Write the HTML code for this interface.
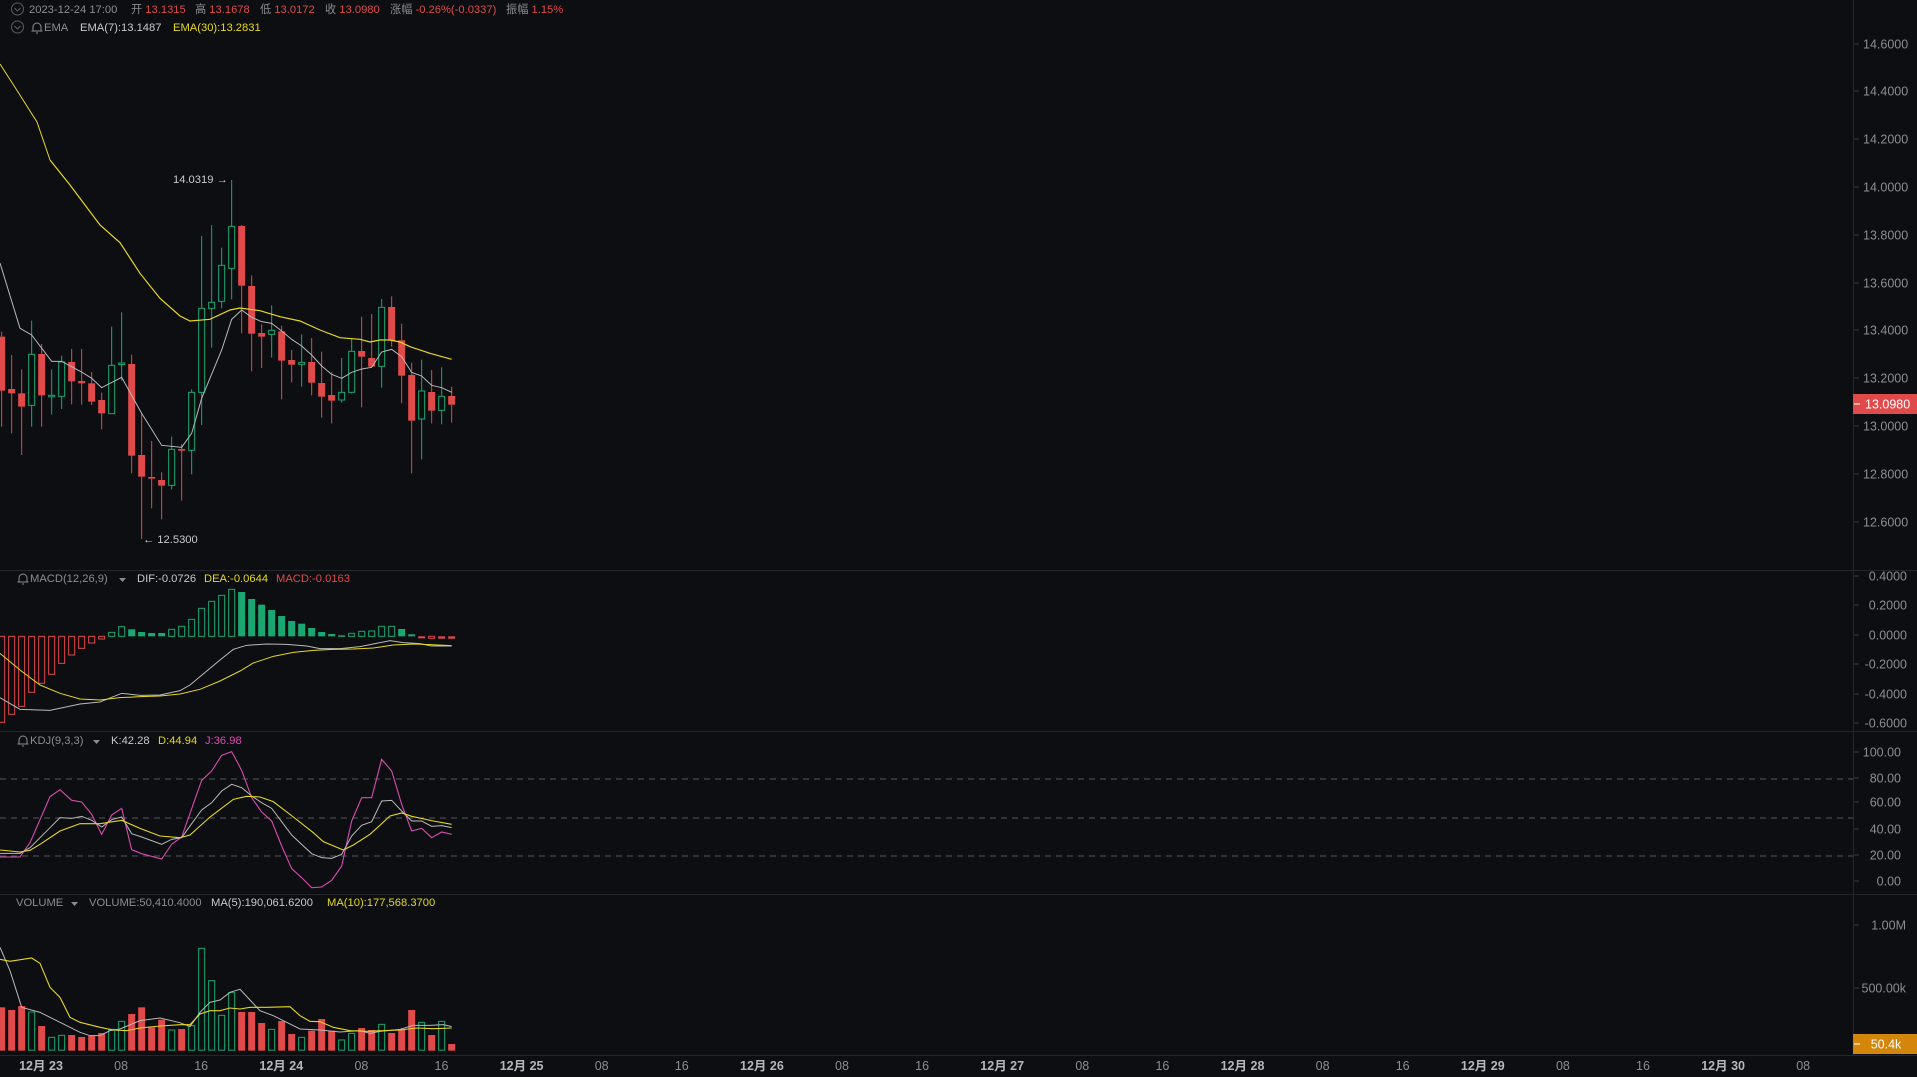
<!DOCTYPE html>
<html><head><meta charset="utf-8"><style>
html,body{margin:0;padding:0;background:#0d0e11;width:1917px;height:1077px;overflow:hidden}
svg{display:block}
text{font-family:"Liberation Sans","Noto Sans CJK SC",sans-serif;font-size:12.5px}
.h text{font-size:11.2px}
</style></head><body>
<svg id="s" width="1917" height="1077" viewBox="0 0 1917 1077" xmlns="http://www.w3.org/2000/svg">
<rect width="1917" height="1077" fill="#0d0e11"/>
<g stroke="#24262b" stroke-width="1">
<line x1="0" y1="570.5" x2="1917" y2="570.5"/><line x1="0" y1="731.5" x2="1917" y2="731.5"/>
<line x1="0" y1="894.5" x2="1917" y2="894.5"/><line x1="0" y1="1055.5" x2="1917" y2="1055.5"/>
<line x1="1853.5" y1="0" x2="1853.5" y2="1055"/>
</g>
<g stroke="#55585e" stroke-dasharray="6,5" stroke-width="1">
<line x1="0" y1="779" x2="1853" y2="779"/><line x1="0" y1="818" x2="1853" y2="818"/><line x1="0" y1="856" x2="1853" y2="856"/>
</g>
<g id="g"></g>
<!-- header -->
<g fill="#8a8d95" class="h">
<circle cx="17.5" cy="9" r="6" fill="none" stroke="#5a5d63"/><path d="M14.5 8l3 3 3-3" fill="none" stroke="#5a5d63"/>
<circle cx="17.5" cy="27" r="6" fill="none" stroke="#5a5d63"/><path d="M14.5 26l3 3 3-3" fill="none" stroke="#5a5d63"/>
<text x="29" y="13">2023-12-24 17:00</text>
<text x="131" y="13">开 <tspan fill="#e04a4a">13.1315</tspan></text>
<text x="195" y="13">高 <tspan fill="#e04a4a">13.1678</tspan></text>
<text x="260" y="13">低 <tspan fill="#e04a4a">13.0172</tspan></text>
<text x="325" y="13">收 <tspan fill="#e04a4a">13.0980</tspan></text>
<text x="390" y="13">涨幅 <tspan fill="#e04a4a">-0.26%(-0.0337)</tspan></text>
<text x="506" y="13">振幅 <tspan fill="#e04a4a">1.15%</tspan></text>
<text x="44" y="31">EMA</text>
<text x="80" y="31" fill="#c8c9cc">EMA(7):13.1487</text>
<text x="173" y="31" fill="#e6d81e">EMA(30):13.2831</text>
<text x="30" y="582">MACD(12,26,9)</text>
<text x="137" y="582" fill="#c8c9cc">DIF:-0.0726</text>
<text x="204" y="582" fill="#e6d81e">DEA:-0.0644</text>
<text x="276" y="582" fill="#e04a4a">MACD:-0.0163</text>
<text x="30" y="744">KDJ(9,3,3)</text>
<text x="111" y="744" fill="#c8c9cc">K:42.28</text>
<text x="158" y="744" fill="#e6d81e">D:44.94</text>
<text x="205" y="744" fill="#d94bb0">J:36.98</text>
<text x="16" y="906">VOLUME</text>
<text x="89" y="906">VOLUME:50,410.4000</text>
<text x="211" y="906" fill="#c8c9cc">MA(5):190,061.6200</text>
<text x="327" y="906" fill="#e6d81e">MA(10):177,568.3700</text>
<path d="M119 578h7l-3.5 4z M93 740h7l-3.5 4z M71 902h7l-3.5 4z"/>
<g fill="none" stroke="#8a8d95" stroke-width="1">
<path d="M33 31v-4a4 4 0 0 1 8 0v4h1.5h-11z M36 33h2"/>
<path d="M19 582v-4a4 4 0 0 1 8 0v4h1.5h-11z M22 584h2"/>
<path d="M19 744v-4a4 4 0 0 1 8 0v4h1.5h-11z M22 746h2"/>
</g>
<text x="173" y="183" fill="#c8c9cc">14.0319 →</text>
<text x="143" y="543" fill="#c8c9cc">← 12.5300</text>
</g>
<g id="ax" fill="#8a8d95"></g>
</svg>
<script>
var NS="http://www.w3.org/2000/svg",g=document.getElementById('g'),ax=document.getElementById('ax');
function el(t,a,p){var e=document.createElementNS(NS,t);for(var k in a)e.setAttribute(k,a[k]);(p||g).appendChild(e);return e}
var R="#e04a4a",G="#1aa772",Y="#e6d81e",W="#b8b9bc",M="#d94bb0";
var C=[[530,692,515,800,'r'],[687,700,585,820,'r'],[700,740,628,885,'r'],[583,736,482,800,'g'],[582,706,552,800,'r'],[706,710,628,764,'g'],[606,709,587,747,'g'],[606,664,567,733,'r'],[663,670,567,734,'r'],[670,725,636,735,'r'],[720,760,698,808,'r'],[616,761,500,762,'g'],[609,613,457,662,'g'],[612,887,584,940,'r'],[885,950,760,1137,'r'],[951,956,843,1045,'r'],[960,977,937,1078,'r'],[868,976,830,988,'g'],[867,872,852,1022,'r'],[697,871,688,943,'g'],[445,697,228,795,'g'],[427,445,195,563,'g'],[316,424,263,445,'g'],[199,325,60,418,'g'],[198,377,195,520,'r'],[378,521,346,634,'r'],[519,530,493,624,'r'],[511,523,436,593,'g'],[514,602,497,718,'r'],[600,614,570,667,'r'],[607,613,523,680,'g'],[606,668,534,706,'r'],[669,710,575,773,'r'],[705,722,636,790,'r'],[697,720,594,728,'g'],[574,697,535,700,'g'],[573,590,470,742,'r'],[594,620,462,622,'r'],[442,619,417,683,'g'],[441,542,409,560,'r'],[541,647,491,730,'r'],[645,782,608,940,'r'],[693,777,599,898,'g'],[696,752,630,790,'r'],[709,751,622,793,'g'],[708,734,680,788,'r']];
function X(i){return (5+30*i)/3}
function py(z){return z/3+160}
C.forEach(function(c,i){var x=X(i),col=c[4]=='r'?R:G;
el('line',{x1:x,x2:x,y1:py(c[2]),y2:py(c[3]),stroke:col,'stroke-width':1});
var t=py(c[0]),b=py(c[1]);if(b-t<1.5)b=t+1.5;
if(c[4]=='r')el('rect',{x:x-3.5,y:t,width:7,height:b-t,fill:R});
else el('rect',{x:x-3,y:t,width:6,height:b-t,fill:'#0d0e11',stroke:G,'stroke-width':1});});
function line(pts,ox,oy,col,w,extra){var d=pts.map(function(p,i){return (i?'L':'M')+(p[0]/3+ox)+' '+(p[1]/3+oy)}).join('');
el('path',{d:(extra||'')+d,fill:'none',stroke:col,'stroke-width':w||1});}
el('path',{d:'M0 64L18 92L37 122L50 160',fill:'none',stroke:Y,'stroke-width':1});
line([[150,0],[210,75],[300,195],[360,248],[420,340],[480,415],[540,468],[570,483],[630,478],[690,450],[720,444],[780,452],[840,470],[900,483],[960,510],[1020,533],[1080,538],[1110,546],[1140,540],[1170,540],[1200,546],[1230,560],[1290,580],[1355,598]],0,160,Y,1.2);
line([[0,309],[60,505],[95,525],[155,604],[185,604],[245,636],[275,655],[305,683],[365,652],[425,760],[485,856],[545,862],[575,820],[605,715],[665,570],[695,478],[725,450],[755,472],[785,485],[815,490],[845,513],[875,538],[905,558],[935,585],[965,618],[995,643],[1025,655],[1055,637],[1085,627],[1115,622],[1145,576],[1175,568],[1205,590],[1235,637],[1265,648],[1295,676],[1325,683],[1355,697]],0,160,W,1);
var H=[[457,'r',0],[433,'r',0],[409,'r',0],[367,'r',0],[340,'r',0],[313,'r',0],[280,'r',0],[255,'r',0],[235,'r',0],[219,'r',0],[207,'r',0],[187,'g',0],[170,'g',0],[178,'g',1],[186,'g',1],[189,'g',1],[189,'g',1],[178,'g',0],[169,'g',0],[148,'g',0],[115,'g',0],[94,'g',0],[76,'g',0],[58,'g',0],[66,'g',1],[87,'g',1],[104,'g',1],[120,'g',1],[138,'g',1],[153,'g',1],[161,'g',1],[174,'g',1],[186,'g',1],[192,'g',1],[196,'g',1],[190,'g',0],[184,'g',0],[183,'g',0],[169,'g',0],[169,'g',0],[177,'g',1],[193,'g',1],[205,'r',1],[205,'r',0],[206,'r',1],[206,'r',1]];
var z0=570+199/3;
H.forEach(function(h,i){var x=X(i),y=h[0]/3+570,t=Math.min(y,z0),b=Math.max(y,z0);if(b-t<1.5)b=t+1.5;var col=h[1]=='r'?R:G;
if(h[2])el('rect',{x:x-3.5,y:t,width:7,height:b-t,fill:col});else el('rect',{x:x-3,y:t,width:6,height:b-t,fill:'none',stroke:col});});
line([[0,383],[60,418],[150,421],[240,402],[300,396],[365,370],[420,376],[480,375],[540,362],[570,345],[600,320],[660,270],[700,238],[740,226],[800,222],[860,223],[920,228],[960,236],[1020,236],[1080,230],[1140,218],[1170,212],[1210,218],[1260,221],[1295,228],[1355,228]],0,570,W,1);
line([[0,250],[60,300],[120,345],[180,370],[240,387],[300,390],[360,383],[420,380],[480,378],[540,372],[600,358],[660,333],[720,303],[760,279],[820,259],[880,247],[940,241],[1000,238],[1060,237],[1120,234],[1180,225],[1240,222],[1290,224],[1355,227]],0,570,Y,1);
line([[0,378],[60,378],[90,335],[150,197],[180,176],[215,208],[245,213],[275,250],[305,310],[335,252],[365,232],[395,356],[425,368],[485,384],[515,340],[545,318],[575,233],[605,148],[635,120],[665,73],[695,62],[725,118],[755,200],[785,243],[815,270],[845,345],[875,413],[905,440],[935,470],[965,468],[995,448],[1025,405],[1055,270],[1085,200],[1115,200],[1145,85],[1175,120],[1205,220],[1235,300],[1265,292],[1295,320],[1325,303],[1355,310]],0,731,M,1.1);
line([[0,367],[60,367],[90,350],[150,290],[180,260],[215,262],[245,256],[275,268],[305,288],[335,266],[365,258],[395,308],[425,318],[485,340],[515,325],[545,320],[575,278],[605,237],[635,215],[665,180],[695,160],[725,170],[755,195],[785,215],[815,232],[845,272],[875,312],[905,340],[935,368],[965,380],[995,382],[1025,370],[1055,315],[1085,283],[1115,272],[1145,210],[1175,208],[1205,240],[1235,270],[1265,270],[1295,286],[1325,284],[1355,290]],0,731,W,1);
line([[0,357],[60,363],[90,358],[120,340],[180,300],[240,278],[300,278],[365,268],[420,292],[480,315],[540,320],[570,312],[630,258],[700,205],[740,196],[780,198],[820,212],[880,258],[940,305],[970,332],[1030,357],[1060,342],[1110,310],[1170,255],[1205,246],[1235,256],[1300,270],[1355,280]],0,731,Y,1.1);
var V=[[340,'r'],[348,'r'],[336,'r'],[354,'g'],[396,'r'],[430,'g'],[424,'g'],[423,'r'],[429,'r'],[426,'r'],[417,'r'],[406,'g'],[382,'g'],[360,'r'],[340,'r'],[400,'r'],[377,'r'],[408,'g'],[405,'r'],[395,'g'],[163,'g'],[260,'g'],[364,'g'],[296,'g'],[354,'r'],[354,'r'],[387,'r'],[406,'g'],[381,'r'],[420,'r'],[430,'g'],[410,'r'],[375,'r'],[410,'r'],[438,'g'],[418,'g'],[402,'r'],[408,'r'],[391,'g'],[417,'r'],[408,'r'],[348,'r'],[385,'g'],[423,'r'],[382,'g'],[450,'r']];
var vb=894+470/3;
V.forEach(function(v,i){var x=X(i),t=v[0]/3+894;if(v[1]=='r')el('rect',{x:x-3.5,y:t,width:7,height:vb-t,fill:R});else el('rect',{x:x-3,y:t,width:6,height:vb-t-0.5,fill:'none',stroke:G});});
line([[0,160],[30,230],[65,340],[120,355],[180,385],[240,415],[270,425],[300,425],[330,410],[360,405],[420,380],[480,372],[540,386],[570,398],[600,355],[630,325],[660,318],[690,295],[720,286],[750,318],[780,350],[820,365],[860,385],[900,405],[960,408],[1020,414],[1080,410],[1110,418],[1140,412],[1200,406],[1240,394],[1290,394],[1330,392],[1355,398]],0,894,W,1);
line([[0,196],[30,202],[95,192],[120,208],[150,280],[180,310],[210,370],[240,385],[300,400],[340,408],[380,410],[420,402],[480,396],[540,392],[570,392],[600,360],[630,350],[660,350],[690,342],[720,345],[750,340],[800,340],[870,338],[900,365],[930,382],[960,383],[1000,400],[1050,410],[1100,412],[1150,410],[1200,408],[1250,402],[1300,404],[1355,402]],0,894,Y,1.1);
function T(x,y,s,a){var e=el('text',{x:x,y:y,'text-anchor':a||'start'},ax);e.textContent=s;return e}
function tick(y){el('line',{x1:1854,x2:1859,y1:y,y2:y,stroke:'#3a3c42'},ax)}
[['14.6000',44],['14.4000',91],['14.2000',139],['14.0000',187],['13.8000',235],['13.6000',283],['13.4000',330],['13.2000',378],['13.0000',426],['12.8000',474],['12.6000',522]].forEach(function(p){tick(p[1]);T(1863,p[1]+4.5,p[0]);});
el('rect',{x:1853,y:394,width:64,height:20,fill:'#e04a4a'},ax);
el('line',{x1:1854,x2:1860,y1:404,y2:404,stroke:'#fff'},ax);
T(1865,408.5,'13.0980').setAttribute('fill','#fff');
[['0.4000',576],['0.2000',605],['0.0000',635],['-0.2000',664],['-0.4000',694],['-0.6000',723]].forEach(function(p){tick(p[1]);T(1907,p[1]+4.5,p[0],'end');});
[['100.00',752],['80.00',778],['60.00',802],['40.00',829],['20.00',855],['0.00',881]].forEach(function(p){tick(p[1]);T(1901,p[1]+4.5,p[0],'end');});
[['1.00M',925],['500.00k',988]].forEach(function(p){tick(p[1]);T(1906,p[1]+4.5,p[0],'end');});
el('rect',{x:1853,y:1034,width:64,height:20,fill:'#d4860b'},ax);
el('line',{x1:1854,x2:1860,y1:1044,y2:1044,stroke:'#fff'},ax);
T(1886,1048.5,'50.4k','middle').setAttribute('fill','#fff');
var days=['23','24','25','26','27','28','29','30'];
for(var i=0;i<23;i++){var x=41+80.1*i,k=i%3;var t;
if(k==0){t=T(x,1070,'12月 '+days[i/3],'middle');t.setAttribute('fill','#b5b7bc');t.setAttribute('font-weight','bold');}
else T(x,1070,k==1?'08':'16','middle');}
</script>
</body></html>
